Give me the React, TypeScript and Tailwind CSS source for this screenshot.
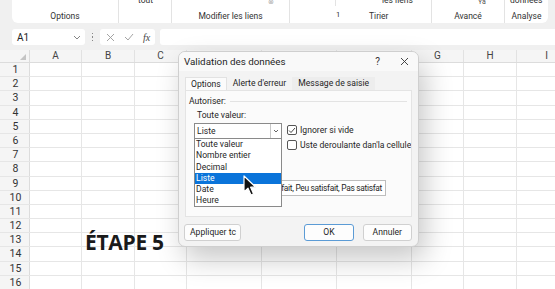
import React from 'react';

const cols = [
  { label: 'A', w: 52 },
  { label: 'B', w: 53 },
  { label: 'C', w: 52 },
  { label: 'D', w: 75 },
  { label: 'E', w: 75 },
  { label: 'F', w: 75 },
  { label: 'G', w: 52 },
  { label: 'H', w: 53 },
  { label: 'I', w: 60 },
];

const rows = Array.from({ length: 16 }, (_, i) => i + 1);

const listItems = ['Toute valeur', 'Nombre entier', 'Decimal', 'Liste', 'Date', 'Heure'];

function Ribbon() {
  return (
    <div className="h-[29px] bg-[#f0f0f0] px-[12px] pr-[7px]">
      <div className="relative flex h-[23px] rounded-b-[6px] bg-white text-[8.5px] leading-none text-[#333]">
        <div className="flex w-[107px] shrink-0 items-end justify-center border-r border-[#e3e3e3] pb-[3px]">Options</div>
        <div className="relative w-[53px] shrink-0 border-r border-[#e3e3e3]">
          <span className="absolute left-[19px] top-[-4px]">tout</span>
        </div>
        <div className="flex w-[118px] shrink-0 items-end justify-center border-r border-[#e3e3e3] pb-[3px]">Modifier les liens</div>
        <span className="absolute left-[256px] top-[-1px] text-[7px] text-[#aaa]">⊗</span>
        <div className="relative w-[142px] shrink-0 border-r border-[#e3e3e3]">
          <span className="absolute left-[45px] top-0 h-[6px] border-l border-[#e3e3e3]" />
          <span className="absolute left-[92px] top-[-4px]">les liens</span>
          <span className="absolute bottom-[5px] left-[46px] text-[7.5px]">1</span>
          <span className="absolute bottom-[3px] left-[79px]">Tirier</span>
        </div>
        <div className="relative flex w-[73px] shrink-0 items-end justify-center border-r border-[#e3e3e3] pb-[3px]">
          <span className="absolute left-[46px] top-[-1px] text-[7px] text-[#555]">Ya</span>
          Avancé
        </div>
        <div className="relative flex w-[43px] shrink-0 items-end justify-center pb-[3px]">
          <span className="absolute left-[5px] top-[-4px]">données</span>
          Analyse
        </div>
      </div>
    </div>
  );
}

function FormulaBar() {
  return (
    <div className="flex h-[21px] items-start bg-[#f0f0f0] pl-[12px]">
      <div className="flex h-[16px] w-[73px] items-center justify-between rounded-[3px] bg-white pl-[5px] pr-[4px] text-[10px] text-[#222]">
        <span>A1</span>
        <svg width="8" height="5" viewBox="0 0 8 5" fill="none" stroke="#777" strokeWidth="0.9">
          <path d="M1 1l3 3 3-3" />
        </svg>
      </div>
      <div className="flex h-[16px] w-[15px] flex-col items-center justify-center gap-[2px]">
        <span className="h-[1.5px] w-[1.5px] bg-[#888]" />
        <span className="h-[1.5px] w-[1.5px] bg-[#888]" />
        <span className="h-[1.5px] w-[1.5px] bg-[#888]" />
      </div>
      <div className="flex h-[16px] w-[55px] items-center gap-[9px] rounded-[3px] bg-white pl-[6px] text-[#8a8a8a]">
        <svg width="9" height="9" viewBox="0 0 9 9" fill="none" stroke="#9a9a9a" strokeWidth="0.9">
          <path d="M1 1l7 7M8 1l-7 7" />
        </svg>
        <svg width="10" height="8" viewBox="0 0 10 8" fill="none" stroke="#9a9a9a" strokeWidth="0.9">
          <path d="M1 4l3 3 5-6" />
        </svg>
        <span className="font-['Liberation_Serif',serif] text-[10px] italic text-[#444]">fx</span>
      </div>
      <div className="ml-[5px] h-[16px] flex-1 rounded-l-[3px] bg-white" />
    </div>
  );
}

function Sheet() {
  return (
    <div className="bg-white">
      <div className="flex h-[13px] border-b border-[#dcdcdc] bg-[#f5f5f5] text-[10px] leading-[12px] text-[#444]">
        <div className="relative w-[30px] shrink-0 border-r border-[#dcdcdc]">
          <svg className="absolute bottom-[2px] right-[3px]" width="6" height="6" viewBox="0 0 6 6">
            <path d="M6 0V6H0Z" fill="#c4c4c4" />
          </svg>
        </div>
        {cols.map((c) => (
          <div key={c.label} style={{ width: c.w }} className="shrink-0 border-r border-[#e2e2e2] text-center">
            {c.label}
          </div>
        ))}
      </div>
      {rows.map((r) => (
        <div key={r} className="flex h-[14.2px] border-b border-[#e6e6e6]">
          <div className="w-[30px] shrink-0 border-r border-[#dcdcdc] bg-[#f5f5f5] pl-[2px] text-center text-[10.5px] leading-[14px] text-[#333]">
            {r}
          </div>
          {cols.map((c) => (
            <div key={c.label} style={{ width: c.w }} className="shrink-0 border-r border-[#e6e6e6]" />
          ))}
        </div>
      ))}
    </div>
  );
}

function Checkbox({ checked, label }: { checked?: boolean; label: string }) {
  return (
    <div className="flex items-center gap-[3px] whitespace-nowrap">
      <div className="flex h-[10px] w-[10px] shrink-0 items-center justify-center rounded-[2px] border border-[#555] bg-white">
        {checked && (
          <svg width="8" height="7" viewBox="0 0 8 7" fill="none" stroke="#333" strokeWidth="0.9">
            <path d="M1 3.5l2 2L7 1" />
          </svg>
        )}
      </div>
      <span>{label}</span>
    </div>
  );
}

function Dialog() {
  return (
    <div className="absolute left-[178px] top-[51px] flex h-[196px] w-[241px] flex-col overflow-hidden rounded-[7px] border border-[#cfcfcf] bg-[#f3f3f3] text-[8.6px] leading-none text-[#1f1f1f] shadow-[6px_12px_28px_rgba(0,0,0,0.22)]">
      <div className="flex h-[19px] items-center justify-between bg-[#f9f9f9] pl-[5px] pr-[9px]">
        <span className="text-[9.8px]">Validation des données</span>
        <div className="flex items-center gap-[20px] text-[#333]">
          <span className="text-[10px]">?</span>
          <svg width="9" height="9" viewBox="0 0 9 9" fill="none" stroke="#333" strokeWidth="0.9">
            <path d="M1 1l7 7M8 1l-7 7" />
          </svg>
        </div>
      </div>
      <div className="flex flex-1 flex-col px-[6px] pt-[6px]">
        <div className="flex h-[13px] items-stretch">
          <div className="flex items-center border border-b-0 border-[#e2e2e2] bg-[#fbfbfb] px-[5px]">Options</div>
          <div className="flex items-center px-[6px]">Alerte d'erreur</div>
          <div className="flex items-center bg-[#ededed] px-[6px]">Message de saisie</div>
        </div>
        <div className="relative h-[127px] overflow-hidden border border-[#e4e4e4] bg-[#fbfbfb]">
          <div className="flex items-center gap-[4px] pl-[3px] pt-[6px]">
            <span>Autoriser:</span>
            <div className="mr-[4px] h-px flex-1 bg-[#e3e3e3]" />
          </div>
          <div className="pl-[11px] pt-[5px]">Toute valeur:</div>
          <div className="mt-[4px] flex">
            <div className="ml-[8px] flex h-[16px] w-[88px] shrink-0 items-center border border-[#8a8a8a] bg-white pl-[2px]">
              <span className="flex-1">Liste</span>
              <div className="flex h-full w-[11px] items-center justify-center border-l border-[#c8c8c8]">
                <svg width="6" height="4" viewBox="0 0 6 4" fill="none" stroke="#555" strokeWidth="0.9">
                  <path d="M1 1l2 2 2-2" />
                </svg>
              </div>
            </div>
            <div className="ml-[5px] flex flex-col gap-[5px] pt-[2px]">
              <Checkbox checked label="Ignorer si vide" />
              <Checkbox label="Uste deroulante dan'la cellule" />
            </div>
          </div>
          <div className="ml-[15px] mt-[30px] flex h-[16px] w-[185px] items-center justify-end overflow-hidden whitespace-nowrap border border-[#bdbdbd] bg-white pr-[3px] text-[8.4px] tracking-[-0.3px]">
            Très satisfait, Peu satisfait, Pas satisfat
          </div>
          <div className="absolute left-[8px] top-[47px] w-[88px] border border-[#8a8a8a] bg-white">
            {listItems.map((it) => (
              <div
                key={it}
                className={
                  'flex h-[11.2px] items-center pl-[1px] ' + (it === 'Liste' ? 'bg-[#0a74da] text-white' : '')
                }
              >
                {it}
              </div>
            ))}
          </div>
          <svg className="absolute left-[57px] top-[84px]" width="15" height="21" viewBox="0 0 15 21">
            <path d="M1 1V17L5 13.2L8 20L10.6 18.9L7.6 12.2H12.8Z" fill="#111" stroke="#fff" strokeWidth="1.2" strokeLinejoin="round" />
          </svg>
        </div>
        <div className="mt-[7px] flex h-[17px] items-stretch">
          <div className="ml-[-1px] flex w-[59px] items-center overflow-hidden whitespace-nowrap rounded-[3px] border border-[#d0d0d0] bg-[#fdfdfd] pl-[5px]">
            Appliquer tc
          </div>
          <div className="ml-[63px] flex w-[51px] items-center justify-center rounded-[3px] border border-[#5b9bd5] bg-[#fdfdfd]">
            OK
          </div>
          <div className="ml-[9px] flex w-[51px] items-center justify-center rounded-[3px] border border-[#d0d0d0] bg-[#fdfdfd]">
            Annuler
          </div>
        </div>
      </div>
    </div>
  );
}

export default function App() {
  return (
    <div className="relative h-[289px] w-[555px] overflow-hidden bg-white font-['Roboto','Noto_Sans',sans-serif]">
      <Ribbon />
      <FormulaBar />
      <Sheet />
      <div className="absolute left-[85px] top-[227px] font-['Open_Sans',sans-serif] text-[21px] font-bold tracking-[-0.3px] text-[#1a1a1a]">
        ÉTAPE 5
      </div>
      <Dialog />
    </div>
  );
}
